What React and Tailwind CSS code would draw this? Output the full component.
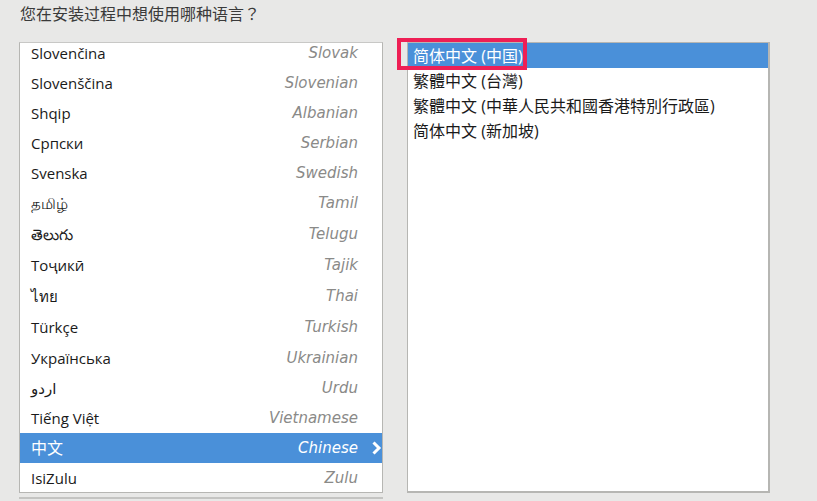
import React from 'react';

const font = { fontFamily: '"Open Sans", "Noto Sans", "Noto Sans CJK SC", "DejaVu Sans", sans-serif' };
const italicFont = { fontFamily: '"DejaVu Sans", "Noto Sans", sans-serif' };

const languages = [
  { native: 'Slovenčina', english: 'Slovak', h: 'h-[30px]' },
  { native: 'Slovenščina', english: 'Slovenian', h: 'h-[30px]' },
  { native: 'Shqip', english: 'Albanian', h: 'h-[30px]' },
  { native: 'Српски', english: 'Serbian', h: 'h-[30px]' },
  { native: 'Svenska', english: 'Swedish', h: 'h-[30px]' },
  { native: 'தமிழ்', english: 'Tamil', h: 'h-[31px]' },
  { native: 'తెలుగు', english: 'Telugu', h: 'h-[31px]' },
  { native: 'Тоҷикӣ', english: 'Tajik', h: 'h-[31px]' },
  { native: 'ไทย', english: 'Thai', h: 'h-[31px]' },
  { native: 'Türkçe', english: 'Turkish', h: 'h-[31px]' },
  { native: 'Українська', english: 'Ukrainian', h: 'h-[30px]' },
  { native: 'اردو', english: 'Urdu', h: 'h-[30px]' },
  { native: 'Tiếng Việt', english: 'Vietnamese', h: 'h-[30px]' },
  { native: '中文', english: 'Chinese', h: 'h-[30px]', selected: true },
  { native: 'IsiZulu', english: 'Zulu', h: 'h-[30px]' },
];

const locales = [
  '简体中文 (中国)',
  '繁體中文 (台灣)',
  '繁體中文 (中華人民共和國香港特別行政區)',
  '简体中文 (新加坡)',
];

export default function App() {
  return (
    <div className="w-[817px] h-[501px] overflow-hidden bg-[#e8e8e7] text-[#2e3436]" style={font}>
      {/* Question */}
      <div className="h-[42px] pl-[20px] pt-[3px] text-[16px] leading-[20px] text-[#3a3a3a]">
        您在安装过程中想使用哪种语言
        <span style={{ fontFamily: '"Noto Sans CJK TC", sans-serif' }}>？</span>
      </div>

      <div className="flex gap-[24px] pl-[19px]">
        {/* Language list */}
        <div className="flex flex-col w-[364px]">
          <div className="h-[451px] bg-white border border-[#b6b6b3] border-t-[#c8c8c6] border-t-dashed overflow-hidden">
            <div className="-mt-[5px]">
              {languages.map((l) => (
                <div
                  key={l.english}
                  className={`${l.h} flex items-center pl-[11px] pr-[24px] text-[15px] relative ${
                    l.selected ? 'bg-[#4a90d9] text-white' : 'text-[#1a1a1a]'
                  }`}
                >
                  <span className={`flex-1 ${l.selected ? 'text-[16px]' : ''}`}>{l.native}</span>
                  <span
                    className={`italic text-[15px] ${l.selected ? 'text-white' : 'text-[#8a8a88]'}`}
                    style={italicFont}
                  >
                    {l.english}
                  </span>
                  {l.selected && (
                    <svg className="absolute right-0 top-[8px]" width="11" height="14" viewBox="0 0 11 14">
                      <polyline points="2.5,1.5 8,7 2.5,12.5" fill="none" stroke="white" strokeWidth="3" />
                    </svg>
                  )}
                </div>
              ))}
            </div>
          </div>
          <div className="mt-[4px] h-[20px] border-t-2 border-[#c4c4c2] bg-[#e8e8e7]" />
        </div>

        {/* Locale list */}
        <div className="relative w-[363px] h-[451px] bg-white border border-[#b6b6b3] border-r-2 border-b-2">
          {locales.map((t, i) => (
            <div
              key={t}
              className={`h-[25px] flex items-center pl-[5px] text-[16px] ${
                i === 0 ? 'bg-[#4a90d9] text-white' : 'text-[#1a1a1a]'
              }`}
            >
              {t}
            </div>
          ))}
          <div className="absolute left-[-11px] top-[-5px] w-[130px] h-[32px] border-4 border-[#ee1f55]" />
        </div>
      </div>
    </div>
  );
}
